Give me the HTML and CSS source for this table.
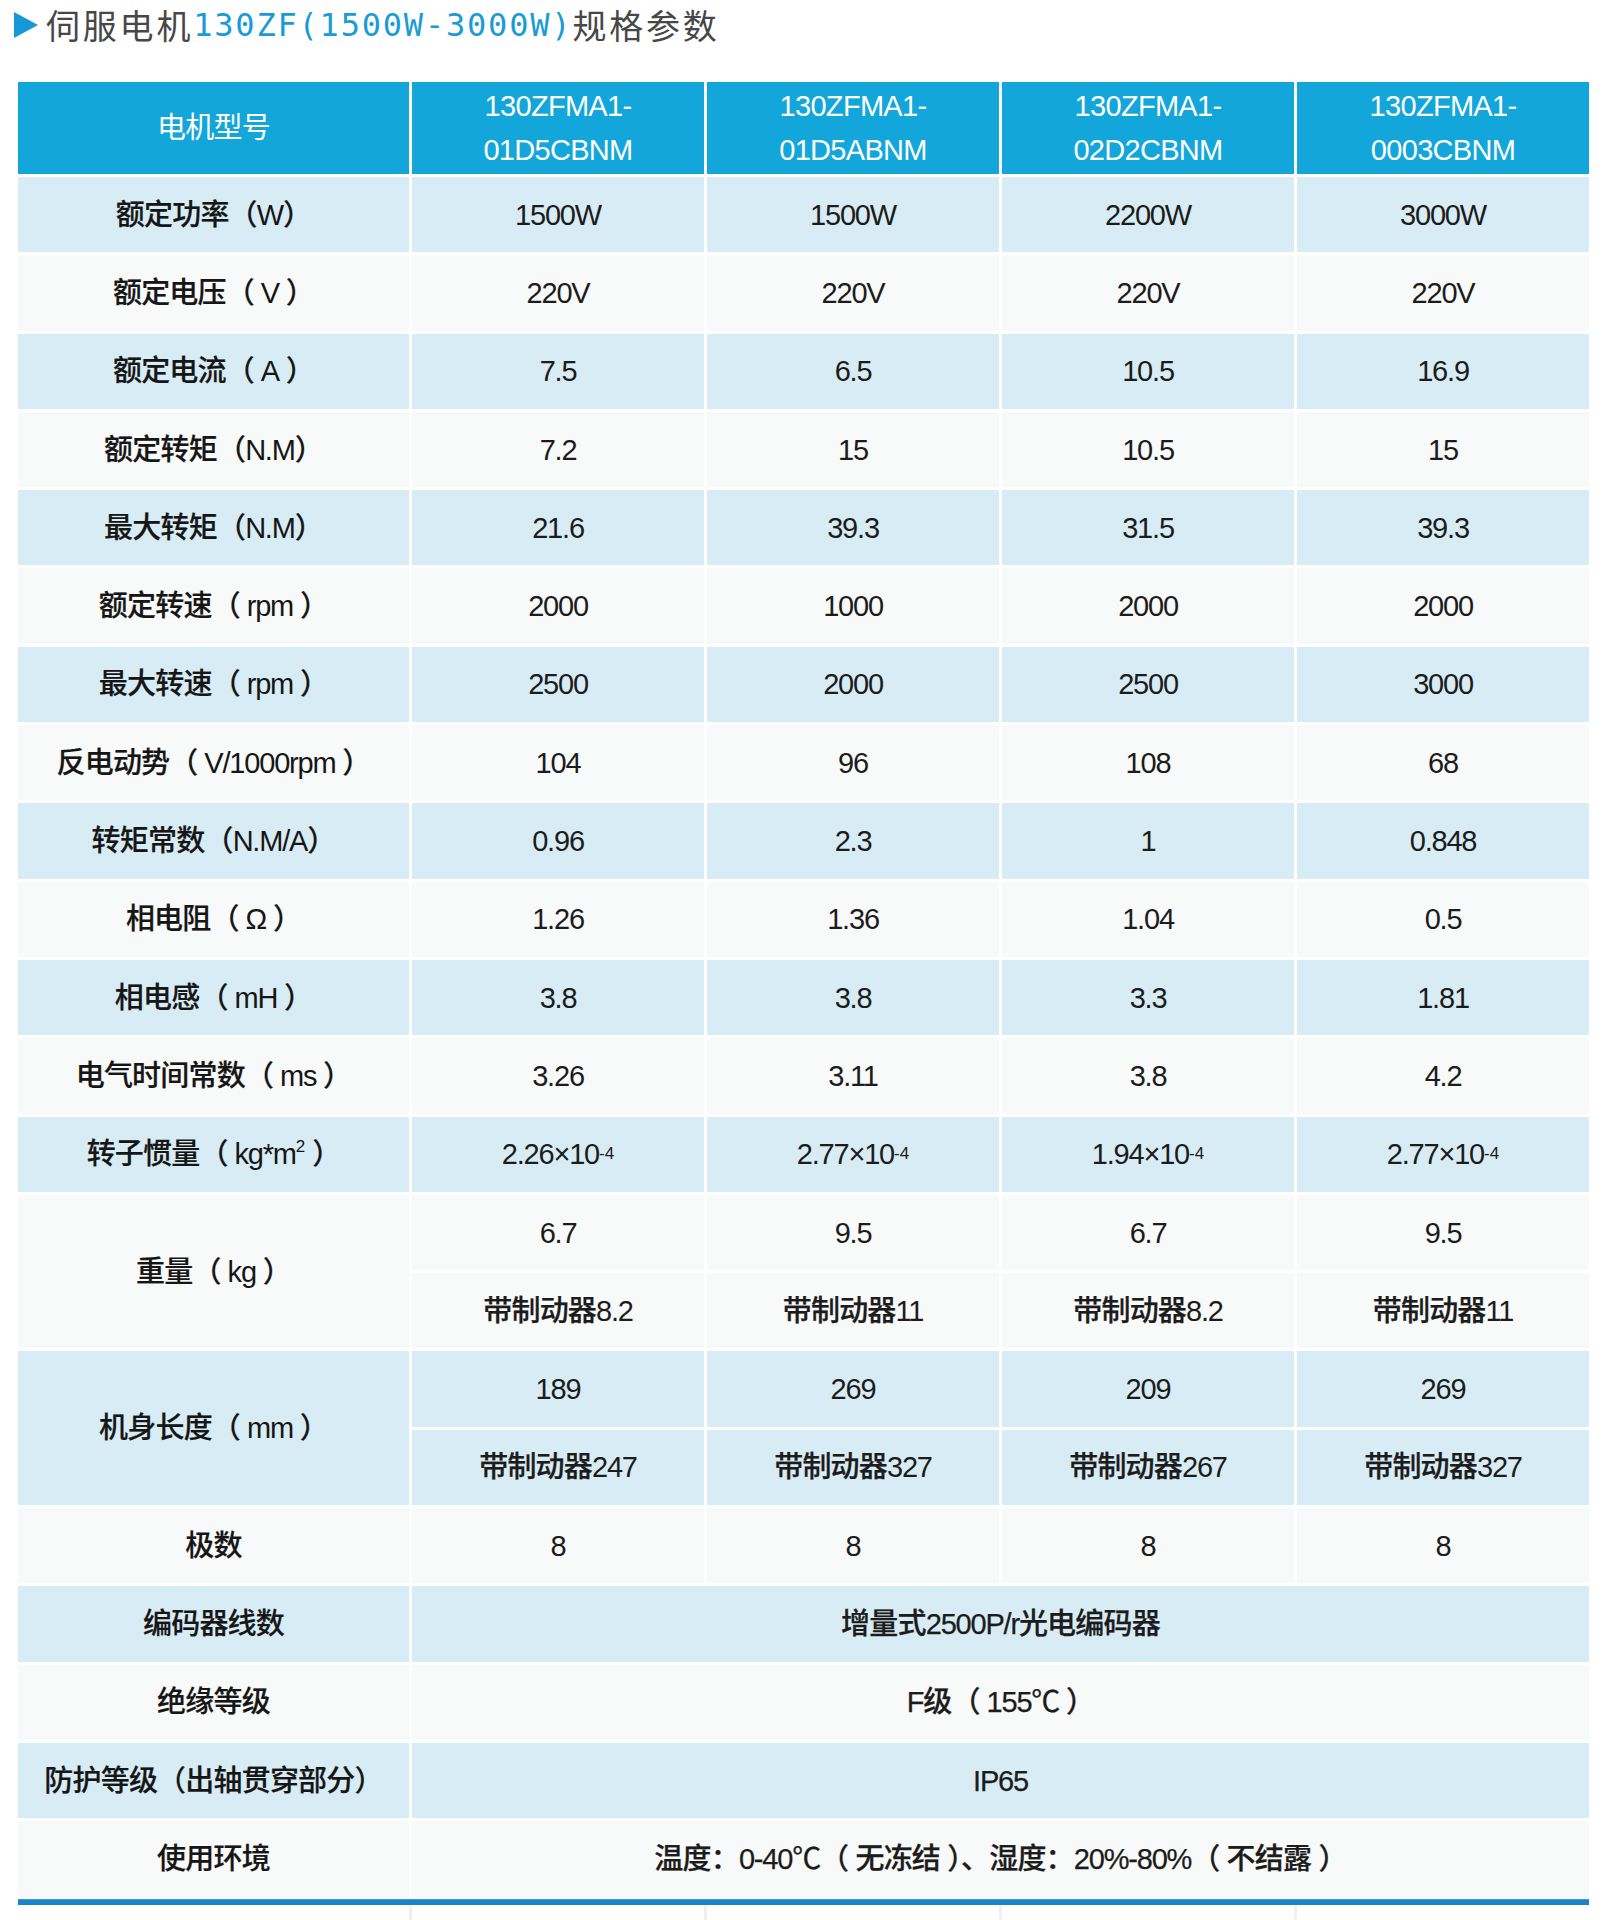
FILE: index.html
```html
<!DOCTYPE html>
<html lang="zh-CN">
<head>
<meta charset="utf-8">
<title>伺服电机130ZF规格参数</title>
<link rel="stylesheet" href="styles.css">
</head>
<body>
<h1 class="title">
  <svg class="tri" width="24" height="26" viewBox="0 0 24 26"><polygon points="0,0 24,13 0,26" fill="#1598d8"/></svg>
  <span class="t-cn">伺服电机</span><span class="t-num">130ZF(1500W-3000W)</span><span class="t-cn">规格参数</span>
</h1>

<div class="spec">
  <div class="c hd">电机型号</div>
  <div class="c hd">130ZFMA1-<br>01D5CBNM</div>
  <div class="c hd">130ZFMA1-<br>01D5ABNM</div>
  <div class="c hd">130ZFMA1-<br>02D2CBNM</div>
  <div class="c hd">130ZFMA1-<br>0003CBNM</div>

  <div class="c b lb">额定功率（<span class="r">W</span>）</div>
  <div class="c b">1500W</div><div class="c b">1500W</div><div class="c b">2200W</div><div class="c b">3000W</div>

  <div class="c w lb">额定电压（<span class="r">&nbsp;V&nbsp;</span>）</div>
  <div class="c w">220V</div><div class="c w">220V</div><div class="c w">220V</div><div class="c w">220V</div>

  <div class="c b lb">额定电流（<span class="r">&nbsp;A&nbsp;</span>）</div>
  <div class="c b">7.5</div><div class="c b">6.5</div><div class="c b">10.5</div><div class="c b">16.9</div>

  <div class="c w lb">额定转矩（<span class="r">N.M</span>）</div>
  <div class="c w">7.2</div><div class="c w">15</div><div class="c w">10.5</div><div class="c w">15</div>

  <div class="c b lb">最大转矩（<span class="r">N.M</span>）</div>
  <div class="c b">21.6</div><div class="c b">39.3</div><div class="c b">31.5</div><div class="c b">39.3</div>

  <div class="c w lb">额定转速（<span class="r">&nbsp;rpm&nbsp;</span>）</div>
  <div class="c w">2000</div><div class="c w">1000</div><div class="c w">2000</div><div class="c w">2000</div>

  <div class="c b lb">最大转速（<span class="r">&nbsp;rpm&nbsp;</span>）</div>
  <div class="c b">2500</div><div class="c b">2000</div><div class="c b">2500</div><div class="c b">3000</div>

  <div class="c w lb">反电动势（<span class="r">&nbsp;V/1000rpm&nbsp;</span>）</div>
  <div class="c w">104</div><div class="c w">96</div><div class="c w">108</div><div class="c w">68</div>

  <div class="c b lb">转矩常数（<span class="r">N.M/A</span>）</div>
  <div class="c b">0.96</div><div class="c b">2.3</div><div class="c b">1</div><div class="c b">0.848</div>

  <div class="c w lb">相电阻（<span class="r">&nbsp;Ω&nbsp;</span>）</div>
  <div class="c w">1.26</div><div class="c w">1.36</div><div class="c w">1.04</div><div class="c w">0.5</div>

  <div class="c b lb">相电感（<span class="r">&nbsp;mH&nbsp;</span>）</div>
  <div class="c b">3.8</div><div class="c b">3.8</div><div class="c b">3.3</div><div class="c b">1.81</div>

  <div class="c w lb">电气时间常数（<span class="r">&nbsp;ms&nbsp;</span>）</div>
  <div class="c w">3.26</div><div class="c w">3.11</div><div class="c w">3.8</div><div class="c w">4.2</div>

  <div class="c b lb">转子惯量（<span class="r">&nbsp;kg*m<sup>2</sup>&nbsp;</span>）</div>
  <div class="c b">2.26×10<sup>-4</sup></div><div class="c b">2.77×10<sup>-4</sup></div><div class="c b">1.94×10<sup>-4</sup></div><div class="c b">2.77×10<sup>-4</sup></div>

  <div class="c w lb span2">重量（<span class="r">&nbsp;kg&nbsp;</span>）</div>
  <div class="c w">6.7</div><div class="c w">9.5</div><div class="c w">6.7</div><div class="c w">9.5</div>
  <div class="c w cv">带制动器<span class="r">8.2</span></div><div class="c w cv">带制动器<span class="r">11</span></div><div class="c w cv">带制动器<span class="r">8.2</span></div><div class="c w cv">带制动器<span class="r">11</span></div>

  <div class="c b lb span2">机身长度（<span class="r">&nbsp;mm&nbsp;</span>）</div>
  <div class="c b">189</div><div class="c b">269</div><div class="c b">209</div><div class="c b">269</div>
  <div class="c b cv">带制动器<span class="r">247</span></div><div class="c b cv">带制动器<span class="r">327</span></div><div class="c b cv">带制动器<span class="r">267</span></div><div class="c b cv">带制动器<span class="r">327</span></div>

  <div class="c w lb">极数</div>
  <div class="c w">8</div><div class="c w">8</div><div class="c w">8</div><div class="c w">8</div>

  <div class="c b lb">编码器线数</div>
  <div class="c b wide cv">增量式<span class="m">2500P/r</span>光电编码器</div>

  <div class="c w lb">绝缘等级</div>
  <div class="c w wide cv"><span class="m">F</span>级（<span class="m">&nbsp;155℃&nbsp;</span>）</div>

  <div class="c b lb">防护等级（出轴贯穿部分）</div>
  <div class="c b wide"><span class="m">IP65</span></div>

  <div class="c w lb">使用环境</div>
  <div class="c w wide cv">温度：<span class="m">0-40℃</span>（&nbsp;无冻结&nbsp;）、湿度：<span class="m">20%-80%</span>（&nbsp;不结露&nbsp;）</div>
</div>

<div class="endline"></div>
<div class="after">
  <div></div><div></div><div></div><div></div><div></div>
</div>
</body>
</html>
```

FILE: styles.css
```css
html, body {
  margin: 0;
  padding: 0;
  background: #ffffff;
}

.title {
  display: flex;
  align-items: center;
  height: 50px;
  margin: 0;
  padding-left: 14px;
  font-weight: 400;
  white-space: nowrap;
}

.tri {
  display: block;
  margin-right: 8px;
  flex: none;
}

.t-cn {
  font-family: "Noto Sans CJK SC", sans-serif;
  font-size: 34px;
  letter-spacing: 2.8px;
  color: #474747;
  line-height: 50px;
}

.t-num {
  font-family: "DejaVu Sans Mono", monospace;
  font-size: 32px;
  letter-spacing: 1.8px;
  color: #1a9bd8;
  line-height: 50px;
}

.spec {
  display: grid;
  grid-template-columns: 391px repeat(4, 292px);
  grid-template-rows: 92px repeat(22, 75.3px);
  gap: 3px;
  margin: 32px 0 0 18px;
  width: 1571px;
  background: #ffffff;
  font-family: "Liberation Sans", "Noto Sans CJK SC", sans-serif;
  color: #1c1c1c;
}

.c {
  display: flex;
  align-items: center;
  justify-content: center;
  text-align: center;
  font-size: 29px;
  letter-spacing: -1.2px;
  font-weight: 400;
  line-height: 44px;
  white-space: nowrap;
}

.hd {
  background: #13a6da;
  color: #ffffff;
  font-size: 29px;
  letter-spacing: -0.7px;
  font-weight: 400;
}

.b {
  background: #d8ecf5;
}

.w {
  background: #f8f9f9;
}

.lb {
  font-size: 29px;
  letter-spacing: -0.8px;
  font-weight: 500;
  color: #161616;
  -webkit-text-stroke: 0.2px #161616;
}

.cv {
  font-weight: 500;
  letter-spacing: -0.8px;
  -webkit-text-stroke: 0.25px #1c1c1c;
}

.r {
  font-weight: 400;
  letter-spacing: -1.2px;
  -webkit-text-stroke: 0;
}

.m {
  font-weight: 400;
  letter-spacing: -1.2px;
  -webkit-text-stroke: 0.25px #1c1c1c;
}

.span2 {
  grid-row: span 2;
}

.wide {
  grid-column: span 4;
}

sup {
  font-size: 17px;
  line-height: 0;
  vertical-align: 12px;
  letter-spacing: 0;
  font-weight: 400;
}

.endline {
  width: 1571px;
  height: 6px;
  margin: 2px 0 0 18px;
  background: #1e82c8;
  border-top: 1px solid #2aa3dc;
  box-sizing: border-box;
}

.after {
  display: grid;
  grid-template-columns: 391px repeat(4, 292px);
  gap: 3px;
  margin-left: 18px;
  width: 1571px;
  height: 15px;
  background: #eef0f1;
}

.after div {
  background: #ffffff;
}
```
